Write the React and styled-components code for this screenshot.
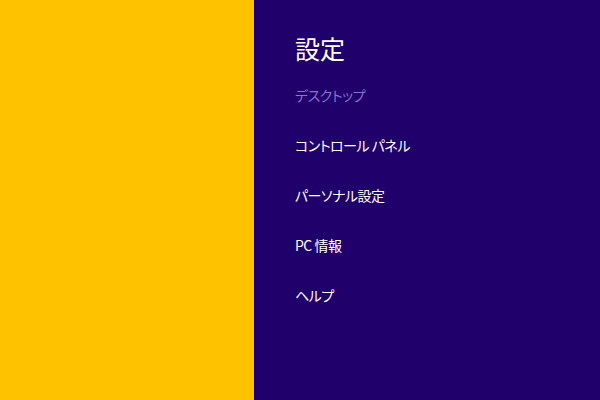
import styled, { createGlobalStyle } from "styled-components";

const GlobalStyle = createGlobalStyle`
  html, body {
    margin: 0;
    padding: 0;
  }
  body {
    font-family: "Noto Sans CJK JP", "Noto Sans", sans-serif;
  }
`;

const Screen = styled.div`
  display: flex;
  width: 600px;
  height: 400px;
  overflow: hidden;
`;

const Backdrop = styled.div`
  width: 254px;
  background-color: #fec200;
`;

const Charm = styled.div`
  flex: 1;
  background-color: #20006a;
  padding: 30px 0 0 41px;
  display: flex;
  flex-direction: column;
`;

const Title = styled.h1`
  margin: 0;
  font-size: 25px;
  font-weight: 400;
  line-height: 36px;
  color: #ffffff;
`;

const MenuList = styled.ul`
  list-style: none;
  margin: 19px 0 0;
  padding: 0;
  display: flex;
  flex-direction: column;
  gap: 30px;
`;

const MenuItem = styled.li`
  font-size: 14px;
  line-height: 20px;
  letter-spacing: -0.5px;
  font-feature-settings: "palt";
  color: ${(props) => (props.muted ? "#8c70d4" : "#ffffff")};
  cursor: pointer;
`;

const items = [
  { label: "デスクトップ", muted: true },
  { label: "コントロール パネル" },
  { label: "パーソナル設定" },
  { label: "PC 情報" },
  { label: "ヘルプ" },
];

export default function App() {
  return (
    <Screen>
      <GlobalStyle />
      <Backdrop />
      <Charm>
        <Title>設定</Title>
        <MenuList>
          {items.map((item) => (
            <MenuItem key={item.label} muted={item.muted}>
              {item.label}
            </MenuItem>
          ))}
        </MenuList>
      </Charm>
    </Screen>
  );
}
